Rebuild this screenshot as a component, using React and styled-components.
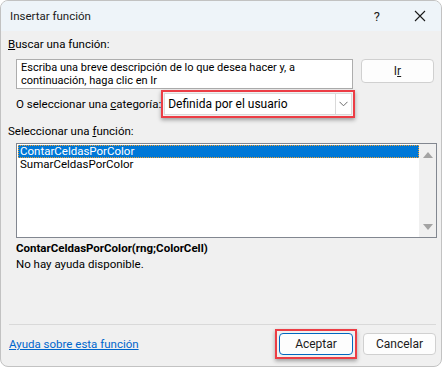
import styled, { createGlobalStyle } from "styled-components";

const Global = createGlobalStyle`
  html, body {
    margin: 0;
    background: #ffffff;
  }
  body {
    font-family: Roboto, "Noto Sans", "Liberation Sans", sans-serif;
    font-size: 11.5px;
    color: #000;
  }
`;

export default function App() {
  return (
    <>
      <Global />
      <Window>
        <TitleBar>
          <Title>Insertar función</Title>
          <TitleIcons>
            <HelpGlyph>?</HelpGlyph>
            <svg width="12" height="12" viewBox="0 0 12 12">
              <path d="M1 1 L11 11 M11 1 L1 11" stroke="#1a1a1a" strokeWidth="1.1" />
            </svg>
          </TitleIcons>
        </TitleBar>

        <Body>
          <Label>
            <u>B</u>uscar una función:
          </Label>

          <SearchRow>
            <SearchBox>
              Escriba una breve descripción de lo que desea hacer y, a
              <br />
              continuación, haga clic en Ir
            </SearchBox>
            <Button $w={73} $h={24}>
              I<u>r</u>
            </Button>
          </SearchRow>

          <CategoryRow>
            <span>
              O seleccionar una <u>c</u>ategoría:
            </span>
            <Highlight>
              <Select>
                <SelectValue>Definida por el usuario</SelectValue>
                <DropButton>
                  <svg width="9" height="6" viewBox="0 0 9 6">
                    <path d="M0.5 0.8 L4.5 4.8 L8.5 0.8" fill="none" stroke="#6b6b6b" strokeWidth="1" />
                  </svg>
                </DropButton>
              </Select>
            </Highlight>
          </CategoryRow>

          <Label $top={6}>
            Seleccionar una <u>f</u>unción:
          </Label>

          <ListBox>
            <Items>
              <Item $selected>ContarCeldasPorColor</Item>
              <Item>SumarCeldasPorColor</Item>
            </Items>
            <ScrollBar>
              <svg width="10" height="6" viewBox="0 0 10 6">
                <path d="M5 0 L10 6 L0 6 Z" fill="#a3a3a3" />
              </svg>
              <svg width="10" height="6" viewBox="0 0 10 6">
                <path d="M0 0 L10 0 L5 6 Z" fill="#a3a3a3" />
              </svg>
            </ScrollBar>
          </ListBox>

          <Signature>ContarCeldasPorColor(rng;ColorCell)</Signature>
          <HelpText>No hay ayuda disponible.</HelpText>

          <Separator />

          <Footer>
            <Link href="#">Ayuda sobre esta función</Link>
            <Buttons>
              <Highlight $pad={2}>
                <Button $w={74} $h={22} $focused>
                  Aceptar
                </Button>
              </Highlight>
              <Button $w={73} $h={22}>
                Cancelar
              </Button>
            </Buttons>
          </Footer>
        </Body>
      </Window>
    </>
  );
}

const Window = styled.div`
  width: 442px;
  height: 367px;
  box-sizing: border-box;
  border: 1px solid #c2c2c2;
  border-radius: 8px;
  overflow: hidden;
  display: flex;
  flex-direction: column;
  background: #f0f0f0;
`;

const TitleBar = styled.div`
  height: 30px;
  background: #eef4f9;
  display: flex;
  align-items: center;
  justify-content: space-between;
  padding: 0 15px 0 9px;
`;

const Title = styled.span`
  font-size: 11.5px;
  color: #1b1b1b;
`;

const TitleIcons = styled.div`
  display: flex;
  align-items: center;
  gap: 34px;
`;

const HelpGlyph = styled.span`
  font-size: 13px;
  color: #1b1b1b;
`;

const Body = styled.div`
  flex: 1;
  display: flex;
  flex-direction: column;
  padding: 6px 5px 0 7px;
`;

const Label = styled.div`
  line-height: 14px;
  margin-top: ${(p) => p.$top || 0}px;
`;

const SearchRow = styled.div`
  display: flex;
  align-items: flex-start;
  gap: 8px;
  margin: 8px 0 0 8px;
`;

const SearchBox = styled.div`
  width: 337px;
  height: 30px;
  box-sizing: border-box;
  background: #fff;
  border: 1px solid #adadad;
  padding: 1px 4px;
  line-height: 13px;
  font-size: 11px;
`;

const Button = styled.div`
  width: ${(p) => p.$w}px;
  height: ${(p) => p.$h}px;
  box-sizing: border-box;
  display: flex;
  align-items: center;
  justify-content: center;
  background: #fdfdfd;
  border: 1px solid ${(p) => (p.$focused ? "#0067c0" : "#d0d0d0")};
  border-radius: 4px;
  color: #1b1b1b;
  font-size: 12px;
`;

const CategoryRow = styled.div`
  display: flex;
  align-items: center;
  margin: 1px 0 0 8px;
`;

const Highlight = styled.div`
  padding: ${(p) => p.$pad ?? 1}px;
  border: 2px solid #ec3d45;
  box-shadow: 0 2px 4px rgba(0, 0, 0, 0.35);
`;

const Select = styled.div`
  width: 188px;
  height: 22px;
  box-sizing: border-box;
  background: #fff;
  border: 1px solid #dadada;
  display: flex;
  align-items: center;
`;

const SelectValue = styled.span`
  flex: 1;
  padding-left: 3px;
  font-size: 12px;
`;

const DropButton = styled.div`
  width: 16px;
  height: 100%;
  box-sizing: border-box;
  border-left: 1px solid #dadada;
  display: flex;
  align-items: center;
  justify-content: center;
`;

const ListBox = styled.div`
  margin: 5px 0 0 8px;
  width: 421px;
  height: 95px;
  box-sizing: border-box;
  border: 1px solid #828790;
  background: #fff;
  display: flex;
`;

const Items = styled.div`
  flex: 1;
  padding: 1px 0 0 1px;
`;

const Item = styled.div`
  height: 13px;
  line-height: 13px;
  padding-left: 2px;
  box-sizing: border-box;
  font-size: 11.5px;
  background: ${(p) => (p.$selected ? "#0078d7" : "transparent")};
  color: ${(p) => (p.$selected ? "#fff" : "#000")};
  outline: ${(p) => (p.$selected ? "1px dotted #f0a030" : "none")};
  outline-offset: -1px;
`;

const ScrollBar = styled.div`
  width: 17px;
  background: #f0f0f0;
  display: flex;
  flex-direction: column;
  align-items: center;
  justify-content: space-between;
  padding: 8px 0 7px;
  box-sizing: border-box;
`;

const Signature = styled.div`
  margin: 3px 0 0 8px;
  font-weight: bold;
  line-height: 14px;
`;

const HelpText = styled.div`
  margin: 2px 0 0 8px;
  line-height: 14px;
`;

const Separator = styled.div`
  margin: auto 0 0 1px;
  height: 1px;
  background: #d9d9d9;
`;

const Footer = styled.div`
  display: flex;
  align-items: center;
  justify-content: space-between;
  height: 41px;
  padding-bottom: 3px;
  box-sizing: border-box;
`;

const Link = styled.a`
  color: #0066cc;
  text-decoration: underline;
  margin-left: 1px;
`;

const Buttons = styled.div`
  display: flex;
  align-items: center;
  gap: 6px;
`;
